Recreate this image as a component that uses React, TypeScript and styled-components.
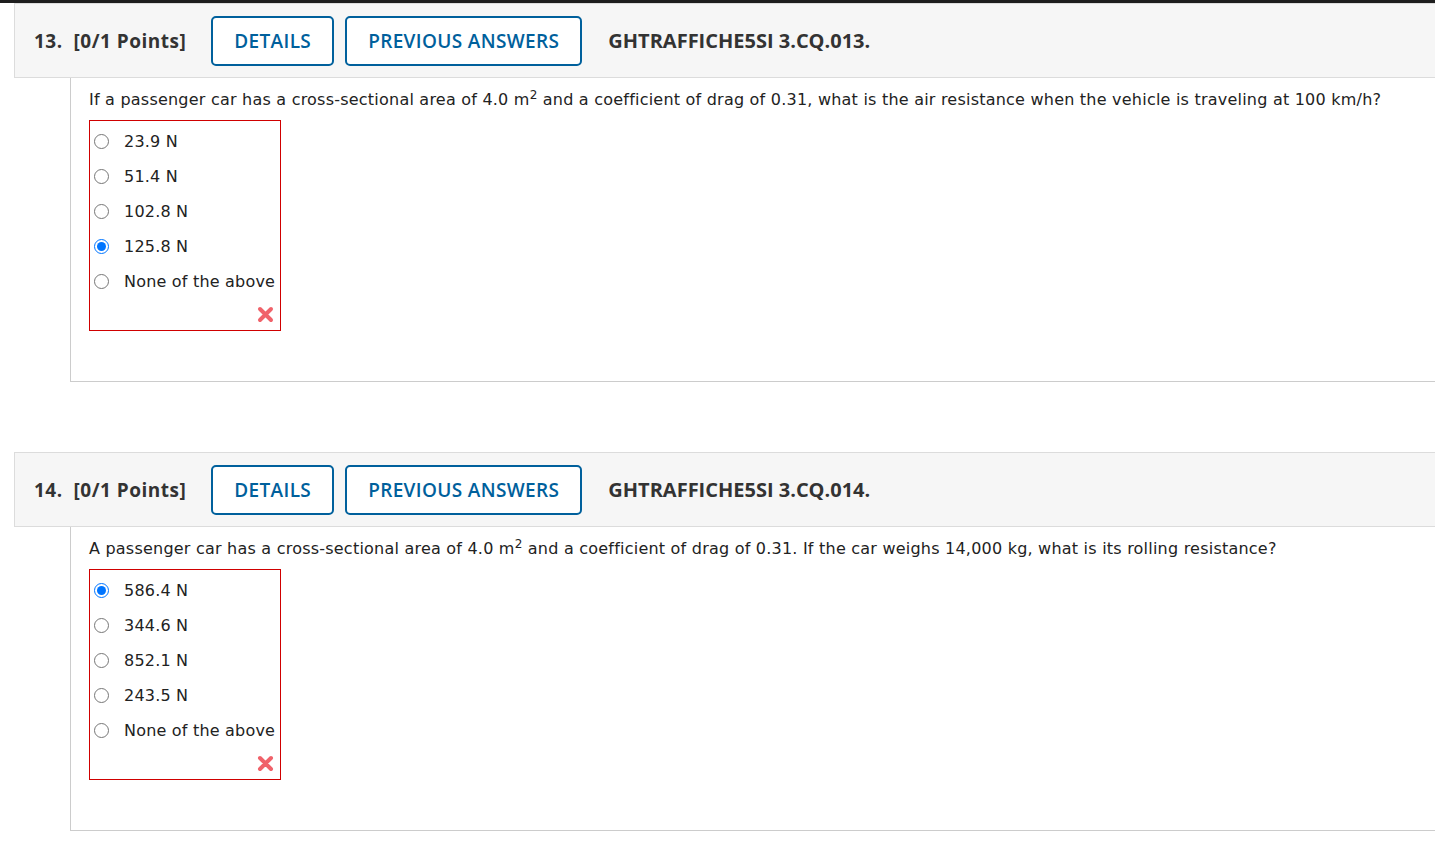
import styled, { createGlobalStyle } from 'styled-components'

const GlobalStyle = createGlobalStyle`
  html, body {
    margin: 0;
    padding: 0;
    background: #fff;
    overflow: hidden;
  }
`

const TopRule = styled.div`
  height: 3px;
  background: #1e1e1e;
`

const Page = styled.div`
  padding-left: 14px;
`

const Question = styled.section<{ $gap?: number }>`
  margin-bottom: ${props => props.$gap ?? 0}px;
`

const Header = styled.header`
  height: 73px;
  display: flex;
  align-items: center;
  gap: 11px;
  padding-left: 19px;
  background: #f6f6f6;
  border: 1px solid #dcdcdc;
  border-right: none;
  font-family: "Open Sans", sans-serif;
`

const Number = styled.span`
  font-size: 19px;
  font-weight: 700;
  color: #333;
  white-space: pre;
  letter-spacing: 0.5px;
  margin-right: 14px;
`

const HeadButton = styled.button`
  height: 50px;
  padding: 0 21px;
  background: #fff;
  border: 2px solid #00609c;
  border-radius: 5px;
  color: #00609c;
  font-family: "Open Sans", sans-serif;
  font-size: 19px;
  font-weight: 600;
  letter-spacing: 0.35px;
  cursor: pointer;
`

const Title = styled.span`
  margin-left: 15px;
  font-size: 20px;
  font-weight: 700;
  color: #333;
`

const Body = styled.div`
  margin-left: 56px;
  border-left: 1px solid #ccc;
  border-bottom: 1px solid #ccc;
  padding: 11px 0 50px 18px;
  font-family: "DejaVu Sans", Verdana, sans-serif;
  font-size: 16px;
  color: #222;
`

const Prompt = styled.p`
  margin: 0 0 9px;
  line-height: 22px;
  letter-spacing: 0.22px;

  sup {
    font-size: 12px;
    line-height: 0;
  }
`

const Choices = styled.div`
  width: 190px;
  border: 1px solid #d00000;
  padding: 3px 0 0;
`

const Choice = styled.label`
  height: 35px;
  display: flex;
  align-items: center;
  gap: 15px;
  padding-left: 4px;
  letter-spacing: 0.2px;

  input {
    margin: 0;
    width: 15px;
    height: 15px;
  }
`

const Mark = styled.div`
  display: flex;
  justify-content: flex-end;
  align-items: center;
  height: 31px;
  padding-right: 6px;
`

const WrongIcon = () => (
  <svg width="17" height="17" viewBox="0 0 17 17">
    <path d="M3 3 L14 14 M14 3 L3 14" stroke="#f0626a" strokeWidth="4" strokeLinecap="round" />
  </svg>
)

type Q = {
  num: number
  code: string
  prompt: [string, string]
  options: string[]
  picked: number
}

const questions: Q[] = [
  {
    num: 13,
    code: 'GHTRAFFICHE5SI 3.CQ.013.',
    prompt: [
      'If a passenger car has a cross-sectional area of 4.0 m',
      ' and a coefficient of drag of 0.31, what is the air resistance when the vehicle is traveling at 100 km/h?',
    ],
    options: ['23.9 N', '51.4 N', '102.8 N', '125.8 N', 'None of the above'],
    picked: 3,
  },
  {
    num: 14,
    code: 'GHTRAFFICHE5SI 3.CQ.014.',
    prompt: [
      'A passenger car has a cross-sectional area of 4.0 m',
      ' and a coefficient of drag of 0.31. If the car weighs 14,000 kg, what is its rolling resistance?',
    ],
    options: ['586.4 N', '344.6 N', '852.1 N', '243.5 N', 'None of the above'],
    picked: 0,
  },
]

const App = () => (
  <>
    <GlobalStyle />
    <TopRule />
    <Page>
      {questions.map((q, i) => (
        <Question key={q.num} $gap={i === 0 ? 70 : 0}>
          <Header>
            <Number>{`${q.num}.  [0/1 Points]`}</Number>
            <HeadButton type="button">DETAILS</HeadButton>
            <HeadButton type="button">PREVIOUS ANSWERS</HeadButton>
            <Title>{q.code}</Title>
          </Header>
          <Body>
            <Prompt>
              {q.prompt[0]}
              <sup>2</sup>
              {q.prompt[1]}
            </Prompt>
            <Choices>
              {q.options.map((opt, j) => (
                <Choice key={opt}>
                  <input type="radio" name={`q${q.num}`} defaultChecked={j === q.picked} />
                  {opt}
                </Choice>
              ))}
              <Mark>
                <WrongIcon />
              </Mark>
            </Choices>
          </Body>
        </Question>
      ))}
    </Page>
  </>
)

export default App
